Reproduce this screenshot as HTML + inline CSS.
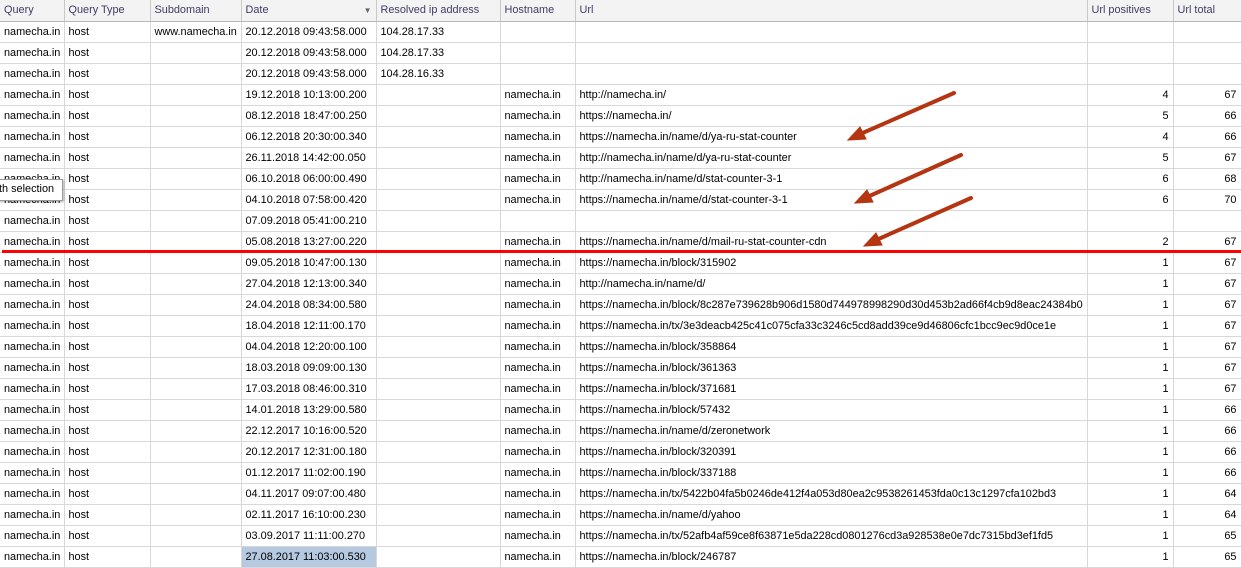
<!DOCTYPE html>
<html><head><meta charset="utf-8"><style>
*{margin:0;padding:0;box-sizing:border-box}
body{width:1241px;height:567px;overflow:hidden;background:#fff;font-family:"Liberation Sans",sans-serif;font-size:10.9px;color:#000;position:relative}
table{border-collapse:collapse;table-layout:fixed;position:absolute;left:0;top:0;width:1241px}
td,th{height:21px;border-right:1px solid #d8d8d8;border-bottom:1px solid #d8d8d8;padding:0 4px;white-space:nowrap;overflow:hidden;font-weight:normal;text-align:left}
th{height:21px;background:#f3f3f3;color:#3d3d66;border-right:1px solid #c8c8c8;border-bottom:1px solid #b8b8b8}
td.n{text-align:right}
td.sel{background:#b5c9e1}
.tip{position:absolute;left:-2px;top:179px;width:65px;height:22px;background:#fff;border:1px solid #999;box-shadow:1px 1px 2px rgba(0,0,0,.3);padding:3px 0 0 0;font-size:10.9px}
.red{position:absolute;left:2px;top:250px;width:1239px;height:3px;background:#f00}
</style></head><body>
<table>
<colgroup><col style="width:64px"><col style="width:86px"><col style="width:91px"><col style="width:135px"><col style="width:124px"><col style="width:75px"><col style="width:512px"><col style="width:86px"><col style="width:68px"></colgroup>
<tr><th>Query</th><th>Query Type</th><th>Subdomain</th><th>Date<span style="float:right;font-size:8px;color:#666;margin-top:2px">&#9660;</span></th><th>Resolved ip address</th><th>Hostname</th><th>Url</th><th>Url positives</th><th>Url total</th></tr>
<tr><td>namecha.in</td><td>host</td><td>www.namecha.in</td><td>20.12.2018 09:43:58.000</td><td>104.28.17.33</td><td></td><td></td><td class="n"></td><td class="n"></td></tr>
<tr><td>namecha.in</td><td>host</td><td></td><td>20.12.2018 09:43:58.000</td><td>104.28.17.33</td><td></td><td></td><td class="n"></td><td class="n"></td></tr>
<tr><td>namecha.in</td><td>host</td><td></td><td>20.12.2018 09:43:58.000</td><td>104.28.16.33</td><td></td><td></td><td class="n"></td><td class="n"></td></tr>
<tr><td>namecha.in</td><td>host</td><td></td><td>19.12.2018 10:13:00.200</td><td></td><td>namecha.in</td><td>http://namecha.in/</td><td class="n">4</td><td class="n">67</td></tr>
<tr><td>namecha.in</td><td>host</td><td></td><td>08.12.2018 18:47:00.250</td><td></td><td>namecha.in</td><td>https://namecha.in/</td><td class="n">5</td><td class="n">66</td></tr>
<tr><td>namecha.in</td><td>host</td><td></td><td>06.12.2018 20:30:00.340</td><td></td><td>namecha.in</td><td>https://namecha.in/name/d/ya-ru-stat-counter</td><td class="n">4</td><td class="n">66</td></tr>
<tr><td>namecha.in</td><td>host</td><td></td><td>26.11.2018 14:42:00.050</td><td></td><td>namecha.in</td><td>http://namecha.in/name/d/ya-ru-stat-counter</td><td class="n">5</td><td class="n">67</td></tr>
<tr><td>namecha.in</td><td>host</td><td></td><td>06.10.2018 06:00:00.490</td><td></td><td>namecha.in</td><td>http://namecha.in/name/d/stat-counter-3-1</td><td class="n">6</td><td class="n">68</td></tr>
<tr><td>namecha.in</td><td>host</td><td></td><td>04.10.2018 07:58:00.420</td><td></td><td>namecha.in</td><td>https://namecha.in/name/d/stat-counter-3-1</td><td class="n">6</td><td class="n">70</td></tr>
<tr><td>namecha.in</td><td>host</td><td></td><td>07.09.2018 05:41:00.210</td><td></td><td></td><td></td><td class="n"></td><td class="n"></td></tr>
<tr><td>namecha.in</td><td>host</td><td></td><td>05.08.2018 13:27:00.220</td><td></td><td>namecha.in</td><td>https://namecha.in/name/d/mail-ru-stat-counter-cdn</td><td class="n">2</td><td class="n">67</td></tr>
<tr><td>namecha.in</td><td>host</td><td></td><td>09.05.2018 10:47:00.130</td><td></td><td>namecha.in</td><td>https://namecha.in/block/315902</td><td class="n">1</td><td class="n">67</td></tr>
<tr><td>namecha.in</td><td>host</td><td></td><td>27.04.2018 12:13:00.340</td><td></td><td>namecha.in</td><td>http://namecha.in/name/d/</td><td class="n">1</td><td class="n">67</td></tr>
<tr><td>namecha.in</td><td>host</td><td></td><td>24.04.2018 08:34:00.580</td><td></td><td>namecha.in</td><td>https://namecha.in/block/8c287e739628b906d1580d744978998290d30d453b2ad66f4cb9d8eac24384b0</td><td class="n">1</td><td class="n">67</td></tr>
<tr><td>namecha.in</td><td>host</td><td></td><td>18.04.2018 12:11:00.170</td><td></td><td>namecha.in</td><td>https://namecha.in/tx/3e3deacb425c41c075cfa33c3246c5cd8add39ce9d46806cfc1bcc9ec9d0ce1e</td><td class="n">1</td><td class="n">67</td></tr>
<tr><td>namecha.in</td><td>host</td><td></td><td>04.04.2018 12:20:00.100</td><td></td><td>namecha.in</td><td>https://namecha.in/block/358864</td><td class="n">1</td><td class="n">67</td></tr>
<tr><td>namecha.in</td><td>host</td><td></td><td>18.03.2018 09:09:00.130</td><td></td><td>namecha.in</td><td>https://namecha.in/block/361363</td><td class="n">1</td><td class="n">67</td></tr>
<tr><td>namecha.in</td><td>host</td><td></td><td>17.03.2018 08:46:00.310</td><td></td><td>namecha.in</td><td>https://namecha.in/block/371681</td><td class="n">1</td><td class="n">67</td></tr>
<tr><td>namecha.in</td><td>host</td><td></td><td>14.01.2018 13:29:00.580</td><td></td><td>namecha.in</td><td>https://namecha.in/block/57432</td><td class="n">1</td><td class="n">66</td></tr>
<tr><td>namecha.in</td><td>host</td><td></td><td>22.12.2017 10:16:00.520</td><td></td><td>namecha.in</td><td>https://namecha.in/name/d/zeronetwork</td><td class="n">1</td><td class="n">66</td></tr>
<tr><td>namecha.in</td><td>host</td><td></td><td>20.12.2017 12:31:00.180</td><td></td><td>namecha.in</td><td>https://namecha.in/block/320391</td><td class="n">1</td><td class="n">66</td></tr>
<tr><td>namecha.in</td><td>host</td><td></td><td>01.12.2017 11:02:00.190</td><td></td><td>namecha.in</td><td>https://namecha.in/block/337188</td><td class="n">1</td><td class="n">66</td></tr>
<tr><td>namecha.in</td><td>host</td><td></td><td>04.11.2017 09:07:00.480</td><td></td><td>namecha.in</td><td>https://namecha.in/tx/5422b04fa5b0246de412f4a053d80ea2c9538261453fda0c13c1297cfa102bd3</td><td class="n">1</td><td class="n">64</td></tr>
<tr><td>namecha.in</td><td>host</td><td></td><td>02.11.2017 16:10:00.230</td><td></td><td>namecha.in</td><td>https://namecha.in/name/d/yahoo</td><td class="n">1</td><td class="n">64</td></tr>
<tr><td>namecha.in</td><td>host</td><td></td><td>03.09.2017 11:11:00.270</td><td></td><td>namecha.in</td><td>https://namecha.in/tx/52afb4af59ce8f63871e5da228cd0801276cd3a928538e0e7dc7315bd3ef1fd5</td><td class="n">1</td><td class="n">65</td></tr>
<tr><td>namecha.in</td><td>host</td><td></td><td class="sel">27.08.2017 11:03:00.530</td><td></td><td>namecha.in</td><td>https://namecha.in/block/246787</td><td class="n">1</td><td class="n">65</td></tr>
</table>
<div class="tip">th selection</div>
<div class="red"></div>
<svg style="position:absolute;left:0;top:0" width="1241" height="567">
<g stroke="#b33512" stroke-width="4" fill="#b33512" stroke-linecap="round">
<line x1="954" y1="93" x2="858" y2="135"/><polygon points="848,140 860,127 866,139" stroke-width="1"/>
<line x1="961" y1="155" x2="865" y2="198"/><polygon points="855,203 867,190 873,202" stroke-width="1"/>
<line x1="971" y1="198" x2="874" y2="241"/><polygon points="864,246 876,233 882,245" stroke-width="1"/>
</g></svg>
</body></html>
